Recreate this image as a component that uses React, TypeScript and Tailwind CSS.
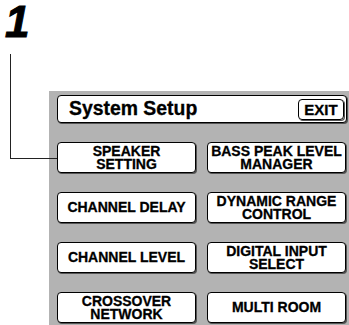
import React from "react";

const buttons = [
  ["SPEAKER", "SETTING"],
  ["BASS PEAK LEVEL", "MANAGER"],
  ["CHANNEL DELAY"],
  ["DYNAMIC RANGE", "CONTROL"],
  ["CHANNEL LEVEL"],
  ["DIGITAL INPUT", "SELECT"],
  ["CROSSOVER", "NETWORK"],
  ["MULTI ROOM"],
];

const App = () => {
  return (
    <div className="relative w-[349px] h-[325px] bg-white font-['Liberation_Sans',Arial,sans-serif] text-black overflow-hidden">
      {/* step number */}
      <div className="h-[91px] pl-[5px] pt-[2px]">
        <span className="block text-[44px] leading-[40px] font-bold italic [-webkit-text-stroke:1px_black]">1</span>
      </div>

      {/* callout line */}
      <div className="absolute left-[10px] top-[54px] w-[47px] h-[105px] border-l border-b border-[#222]" />

      <div className="ml-[49px] w-[300px] h-[234px] bg-[#b3b3b3] pl-[8px] pr-[2px] pt-[4px]">
        <div className="flex h-[28px] items-center justify-between rounded-[4px] border border-black bg-white pl-[11px] pr-[2px] shadow-[1px_1px_0_0_#555]">
          <span className="text-[19.4px] font-bold leading-none [-webkit-text-stroke:0.3px_black]">System Setup</span>
          <span className="flex h-[21px] w-[46px] items-center justify-center rounded-[4px] border border-black text-[15px] font-bold leading-none shadow-[1px_1px_0_0_#555] [-webkit-text-stroke:0.3px_black]">
            EXIT
          </span>
        </div>

        <div className="mt-[19px] grid grid-cols-[139px_139px] gap-x-[11px] gap-y-[19px]">
          {buttons.map((lines, i) => (
            <div
              key={i}
              className="flex h-[31px] flex-col items-center justify-center rounded-[4px] border border-black bg-white text-center text-[14px] font-bold leading-[13px] shadow-[1px_1px_0_0_#555] [-webkit-text-stroke:0.3px_black]"
            >
              {lines.map((l) => (
                <span key={l}>{l}</span>
              ))}
            </div>
          ))}
        </div>
      </div>
    </div>
  );
};

export default App;
